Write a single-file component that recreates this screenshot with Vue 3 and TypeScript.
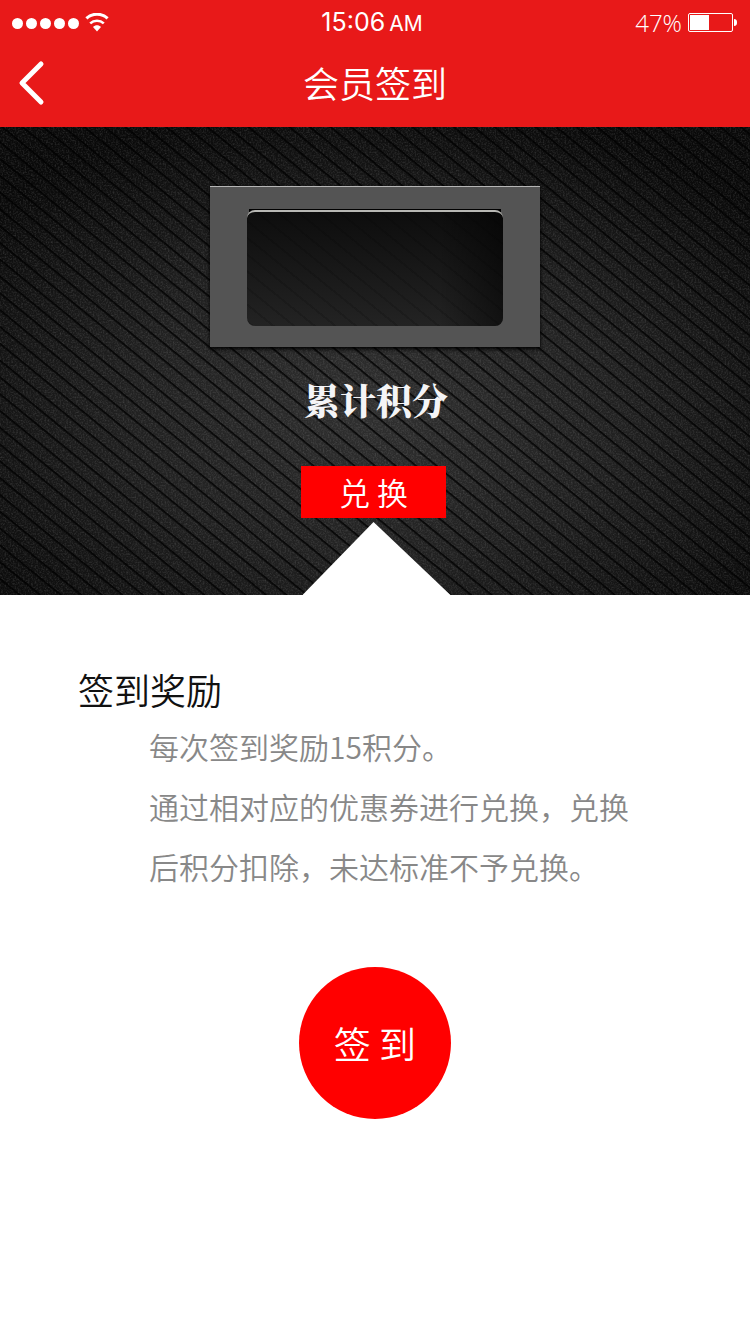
<script setup lang="ts">
interface StatusInfo {
  time: string
  period: string
  battery: number
}

const status: StatusInfo = { time: '15:06', period: 'AM', battery: 47 }
const rules: string[] = [
  '每次签到奖励15积分。',
  '通过相对应的优惠券进行兑换，兑换后积分扣除，未达标准不予兑换。',
]
</script>

<template>
  <div class="page">
    <header class="top">
      <div class="status">
        <div class="signal">
          <i v-for="n in 5" :key="n" class="dot"></i>
          <svg class="wifi" width="24" height="20" viewBox="0 0 24 20" fill="none" stroke="#fff" stroke-width="3" aria-hidden="true">
            <path d="M1.4 5.4C7.2 -0.2 16.8 -0.2 22.6 5.4" />
            <path d="M5.2 10.4C9 6.8 15 6.8 18.8 10.4" stroke-width="2.6" />
            <path d="M8 14C10.2 11.6 13.8 11.6 16 14L12 18.4Z" fill="#fff" stroke="none" />
          </svg>
        </div>
        <div class="clock">{{ status.time }}<span class="period">{{ status.period }}</span></div>
        <div class="power">
          <span>{{ status.battery }}%</span>
          <svg width="50" height="20" viewBox="0 0 50 20" aria-hidden="true">
            <rect x="0.5" y="0.5" width="44" height="18" rx="1.5" fill="none" stroke="#fff" />
            <rect x="2" y="2" width="19" height="15" fill="#fff" />
            <path d="M46 6C48.300 6 49 7.500 49 9.500C49 11.500 48.300 13 46 13Z" fill="#fff" />
          </svg>
        </div>
      </div>
      <div class="nav">
        <button class="back" type="button" aria-label="返回">
          <svg width="28" height="46" viewBox="0 0 28 46" fill="none" stroke="#fff" stroke-width="5" stroke-linecap="round" stroke-linejoin="round" aria-hidden="true">
            <path d="M23 4L4 23L23 42" />
          </svg>
        </button>
        <h1>会员签到</h1>
      </div>
    </header>

    <section class="hero">
      <svg class="texture" width="100%" height="100%" aria-hidden="true">
        <defs>
          <pattern id="stripes" width="20" height="13" patternUnits="userSpaceOnUse" patternTransform="translate(0 14) rotate(39.300)">
            <rect width="20" height="1.700" fill="#000" fill-opacity="0.85" />
          </pattern>
          <radialGradient id="glow" cx="50%" cy="60%" r="66%">
            <stop offset="0" stop-color="#303030" />
            <stop offset="0.5" stop-color="#212121" />
            <stop offset="1" stop-color="#0a0a0a" />
          </radialGradient>
          <filter id="grain" x="0" y="0" width="100%" height="100%">
            <feTurbulence type="fractalNoise" baseFrequency="0.6" numOctaves="2" seed="4" />
            <feColorMatrix type="matrix" values="0 0 0 0 0.500  0 0 0 0 0.500  0 0 0 0 0.500  1.200 0 0 0 -0.500" />
          </filter>
        </defs>
        <rect width="100%" height="100%" fill="url(#glow)" />
        <rect width="100%" height="100%" filter="url(#grain)" opacity="0.32" />
        <rect width="100%" height="100%" fill="url(#stripes)" />
      </svg>
      <div class="frame"><div class="screen"></div></div>
      <h2>累计积分</h2>
      <div class="exchange">
        <button class="redeem" type="button">兑 换</button>
        <div class="notch"></div>
      </div>
    </section>

    <main class="reward">
      <h3>签到奖励</h3>
      <div class="rules">
        <p v-for="rule in rules" :key="rule">{{ rule }}</p>
      </div>
      <button class="sign" type="button">签 到</button>
    </main>
  </div>
</template>

<style>
body {
  background: #fff;
}
</style>

<style scoped>
.page {
  font-family: "Noto Sans CJK SC", sans-serif;
  font-weight: 350;
  color: #111;
}
h1, h2, h3, p {
  margin: 0;
}
button {
  border: 0;
  padding: 0;
  font-family: inherit;
  color: #fff;
  cursor: pointer;
}
.top {
  background: #e81919;
  color: #fff;
}
.status {
  display: grid;
  grid-template-columns: 1fr auto 1fr;
  align-items: center;
  height: 44px;
  padding: 0 12px;
}
.signal {
  display: flex;
  align-items: center;
  gap: 3px;
}
.dot {
  width: 11px;
  height: 11px;
  border-radius: 50%;
  background: #fff;
}
.wifi {
  margin-left: 3px;
}
.clock {
  padding-right: 6px;
  font: 400 25px/44px Inter, sans-serif;
}
.period {
  margin-left: 4px;
  font-size: 21px;
}
.power {
  display: flex;
  align-items: center;
  justify-content: flex-end;
  gap: 6px;
  font: 300 24px/42px "Open Sans", sans-serif;
}
.nav {
  display: grid;
  grid-template-columns: 60px 1fr 60px;
  height: 83px;
}
.back {
  display: flex;
  align-items: center;
  height: 78px;
  padding-left: 18px;
  background: none;
}
h1 {
  font-size: 36px;
  font-weight: 350;
  line-height: 76px;
  text-align: center;
}
.hero {
  position: relative;
  display: flex;
  flex-direction: column;
  align-items: center;
  padding-top: 59px;
  background: #1c1c1c;
}
.texture {
  position: absolute;
  inset: 0;
}
.frame, .hero h2, .exchange {
  position: relative;
}
.frame {
  box-sizing: border-box;
  padding: 23px 37px 21px;
  border-top: 1px solid #b5b5b5;
  background: #545454;
  box-shadow: 0 2px 4px #000;
  isolation: isolate;
}
.screen {
  position: relative;
  box-sizing: border-box;
  width: 256px;
  height: 116px;
  border-top: 2px solid #b8b8b4;
  border-radius: 8px;
  background:
    linear-gradient(90deg, transparent 75%, rgba(0, 0, 0, 0.5)),
    repeating-linear-gradient(219deg, transparent 0 11px, rgba(0, 0, 0, 0.15) 11px 13px),
    linear-gradient(#0d0d0d, #232323);
}
.screen::before {
  content: "";
  position: absolute;
  z-index: -1;
  top: -3px;
  left: 2px;
  right: 2px;
  height: 9px;
  background: #000;
}
h2 {
  margin: 27px 0 0 2px;
  color: #f4f4f6;
  font: 900 36px/52px "Noto Serif CJK SC", "Noto Sans CJK SC", serif;
}
.exchange {
  display: flex;
  flex-direction: column;
  align-items: center;
  gap: 4px;
  margin-top: 40px;
  padding-right: 3px;
}
.redeem {
  width: 145px;
  height: 52px;
  background: #f00;
  font-size: 31px;
  font-weight: 350;
  line-height: 50px;
}
.notch {
  width: 148px;
  height: 73px;
  margin-left: 6px;
  background: #fff;
  clip-path: polygon(48% 0, 100% 100%, 0 100%);
}
.reward {
  display: flex;
  flex-direction: column;
  padding: 67px 78px 60px;
}
h3 {
  font-size: 36px;
  font-weight: 350;
  line-height: 54px;
}
.rules {
  padding: 0 20px 0 71px;
  color: #888;
  font-size: 30px;
  line-height: 60px;
}
.sign {
  align-self: center;
  width: 152px;
  height: 152px;
  margin-top: 71px;
  border-radius: 50%;
  background: #f00;
  font-size: 37px;
  font-weight: 350;
}
</style>
